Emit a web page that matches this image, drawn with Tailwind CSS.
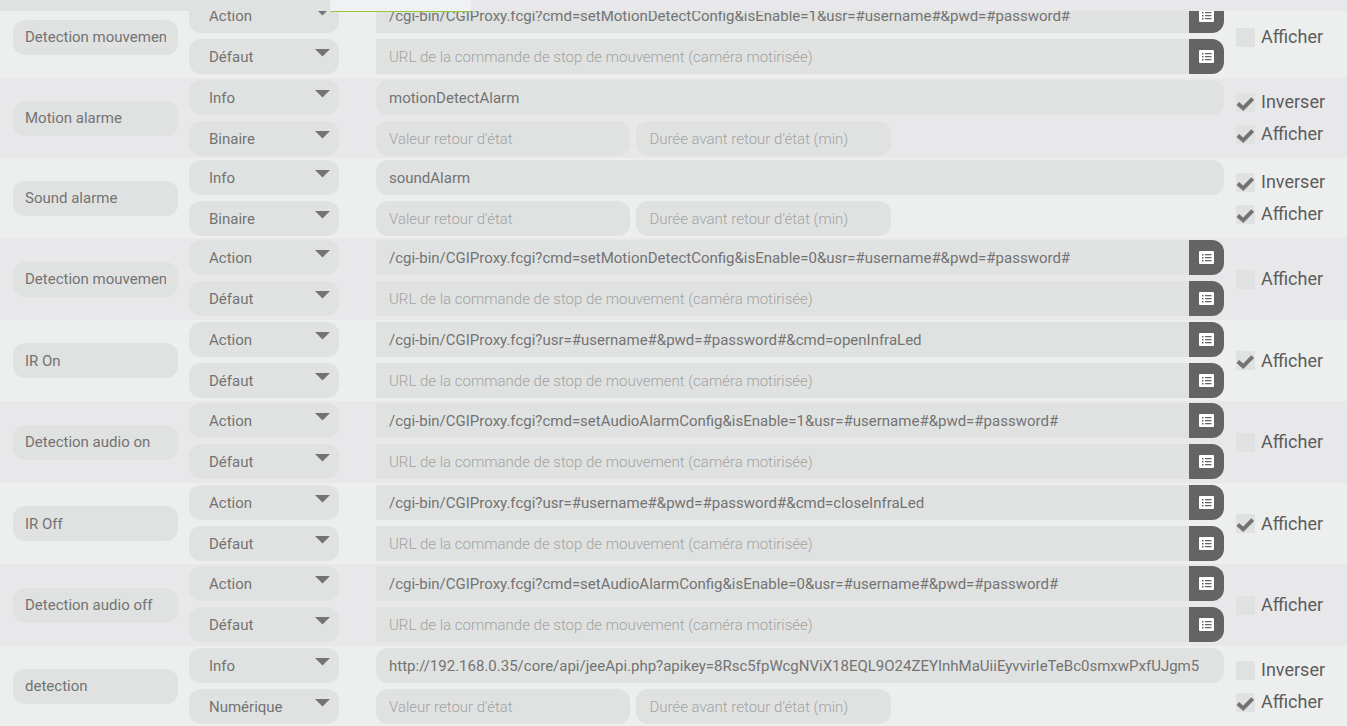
<!DOCTYPE html>
<html lang="fr">
<head>
  <meta charset="UTF-8" />
  <meta name="viewport" content="width=device-width, initial-scale=1.0" />
  <title>Commandes caméra</title>
  <script src="https://cdn.jsdelivr.net/npm/@tailwindcss/browser@4"></script>
</head>
<body class="h-screen overflow-hidden flex flex-col bg-[#ecefee] font-['Roboto',sans-serif] text-[15px] text-[#737373]">

  <!-- Onglets -->
  <header class="flex h-[11px] shrink-0 bg-[#e8e8ea] relative z-10">
    <div class="w-[330px] bg-[#e0e2e1]"></div>
    <div class="w-[141px] h-3 bg-[#eff1f4] border-b border-[#94c83d]"></div>
  </header>

  <!-- Tableau des commandes -->
  <main class="flex-1 min-h-0 overflow-hidden">
    <table class="w-full table-fixed border-collapse -mt-[15px]">
      <colgroup>
        <col class="w-[189px]" />
        <col class="w-[187px]" />
        <col />
        <col class="w-[123px]" />
      </colgroup>
      <tbody id="commands"></tbody>
    </table>
  </main>

  <script>
    const stopUrl = "URL de la commande de stop de mouvement (caméra motirisée)";

    const commands = [
      { name: "Detection mouvement on", type: "Action", subtype: "Défaut", value: "/cgi-bin/CGIProxy.fcgi?cmd=setMotionDetectConfig&isEnable=1&usr=#username#&pwd=#password#", visible: false },
      { name: "Motion alarme", type: "Info", subtype: "Binaire", value: "motionDetectAlarm", invert: true, visible: true },
      { name: "Sound alarme", type: "Info", subtype: "Binaire", value: "soundAlarm", invert: true, visible: true },
      { name: "Detection mouvement off", type: "Action", subtype: "Défaut", value: "/cgi-bin/CGIProxy.fcgi?cmd=setMotionDetectConfig&isEnable=0&usr=#username#&pwd=#password#", visible: false },
      { name: "IR On", type: "Action", subtype: "Défaut", value: "/cgi-bin/CGIProxy.fcgi?usr=#username#&pwd=#password#&cmd=openInfraLed", visible: true },
      { name: "Detection audio on", type: "Action", subtype: "Défaut", value: "/cgi-bin/CGIProxy.fcgi?cmd=setAudioAlarmConfig&isEnable=1&usr=#username#&pwd=#password#", visible: false },
      { name: "IR Off", type: "Action", subtype: "Défaut", value: "/cgi-bin/CGIProxy.fcgi?usr=#username#&pwd=#password#&cmd=closeInfraLed", visible: true },
      { name: "Detection audio off", type: "Action", subtype: "Défaut", value: "/cgi-bin/CGIProxy.fcgi?cmd=setAudioAlarmConfig&isEnable=0&usr=#username#&pwd=#password#", visible: false },
      { name: "detection", type: "Info", subtype: "Numérique", value: "http://192.168.0.35/core/api/jeeApi.php?apikey=8Rsc5fpWcgNViX18EQL9O24ZEYInhMaUiiEyvvirIeTeBc0smxwPxfUJgm5", invert: false, visible: true },
    ];

    const esc = (s) => s.replace(/&/g, "&amp;");

    function select(label, value, options) {
      return `
        <div class="relative w-[150px]">
          <select aria-label="${label}" class="block appearance-none w-full h-[35px] pt-[2px] pl-5 pr-9 rounded-xl bg-[#e0e2e1] outline-none">
            ${options.map((o) => `<option ${o === value ? "selected" : ""}>${o}</option>`).join("")}
          </select>
          <svg class="absolute right-[9px] top-[10px] w-[15px] h-[8px] pointer-events-none" viewBox="0 0 15 8"><path d="M0 0h15L7.5 7.500z" fill="#737373"/></svg>
        </div>`;
    }

    function input(label, value, placeholder, shape) {
      return `<input type="text" aria-label="${label}" value="${esc(value)}" placeholder="${placeholder}" class="block min-w-0 h-[35px] bg-[#e0e2e1] outline-none placeholder:font-light placeholder:text-[#a0a2a1] placeholder:opacity-100 ${shape}" />`;
    }

    function urlField(label, value, placeholder) {
      return `
        <div class="flex">
          ${input(label, value, placeholder, "flex-1 px-[13px]")}
          <button type="button" aria-label="Choisir une commande" class="w-[35px] h-[35px] flex items-center justify-center rounded-r-xl bg-[#646464]">
            <svg class="w-[15px] h-[13px]" viewBox="0 0 15 13">
              <rect width="15" height="13" rx="1" fill="#fff"/>
              <path d="M3 3h1.500v1.500H3zM3 6h1.500v1.500H3zM3 9h1.500v1.500H3zM6 3h6.500v1.300H6zM6 6h6.500v1.300H6zM6 9h6.500v1.300H6z" fill="#646464"/>
            </svg>
          </button>
        </div>`;
    }

    function checkbox(label, checked) {
      return `
        <label class="flex items-center gap-[6px] h-6 text-lg text-[#5c5c5c]">
          <span class="relative w-[19px] h-[19px]">
            <input type="checkbox" ${checked ? "checked" : ""} class="peer block appearance-none w-full h-full bg-[#e0e2e1]" />
            <svg class="hidden peer-checked:block absolute left-0 top-[3px] w-[19px] h-4 pointer-events-none" viewBox="0 0 19 16"><path d="M1.800 7.600l5.400 4.700L16.700 2.700" fill="none" stroke="#737373" stroke-width="4"/></svg>
          </span>
          ${label}
        </label>`;
    }

    document.getElementById("commands").innerHTML = commands.map((c, i) => {
      const info = c.type === "Info";
      const height = info ? "h-20" : c.name.startsWith("IR") ? "h-[81px]" : "h-[82px]";
      return `
        <tr class="${height} odd:bg-[#ecefee] even:bg-[#e8e8ea]">
          <td class="pl-[13px] pr-[11px]">${input("Nom", c.name, "", "w-full px-3 rounded-xl")}</td>
          <td class="align-top pt-[2px]">
            <div class="flex flex-col gap-[6px]">
              ${select("Type", c.type, ["Info", "Action"])}
              ${select("Sous-type", c.subtype, info ? ["Binaire", "Numérique", "Autre"] : ["Défaut", "Curseur", "Message"])}
            </div>
          </td>
          <td class="align-top pt-[2px]">
            <div class="flex flex-col gap-[6px]">
              ${info ? `
                ${input("Requête", c.value, "", "w-full px-[13px] rounded-xl")}
                <div class="flex gap-[6px]">
                  ${input("Valeur retour d'état", "", "Valeur retour d'état", "w-[30%] px-[13px] rounded-xl")}
                  ${input("Durée avant retour d'état", "", "Durée avant retour d'état (min)", "w-[30%] px-[13px] rounded-xl")}
                </div>` : `
                ${urlField("URL de la commande", c.value, "")}
                ${urlField("URL de stop", "", stopUrl)}`}
            </div>
          </td>
          <td class="pl-3">
            <div class="flex flex-col gap-2">
              ${info ? checkbox("Inverser", c.invert) : ""}
              ${checkbox("Afficher", c.visible)}
            </div>
          </td>
        </tr>`;
    }).join("");
  </script>
</body>
</html>
